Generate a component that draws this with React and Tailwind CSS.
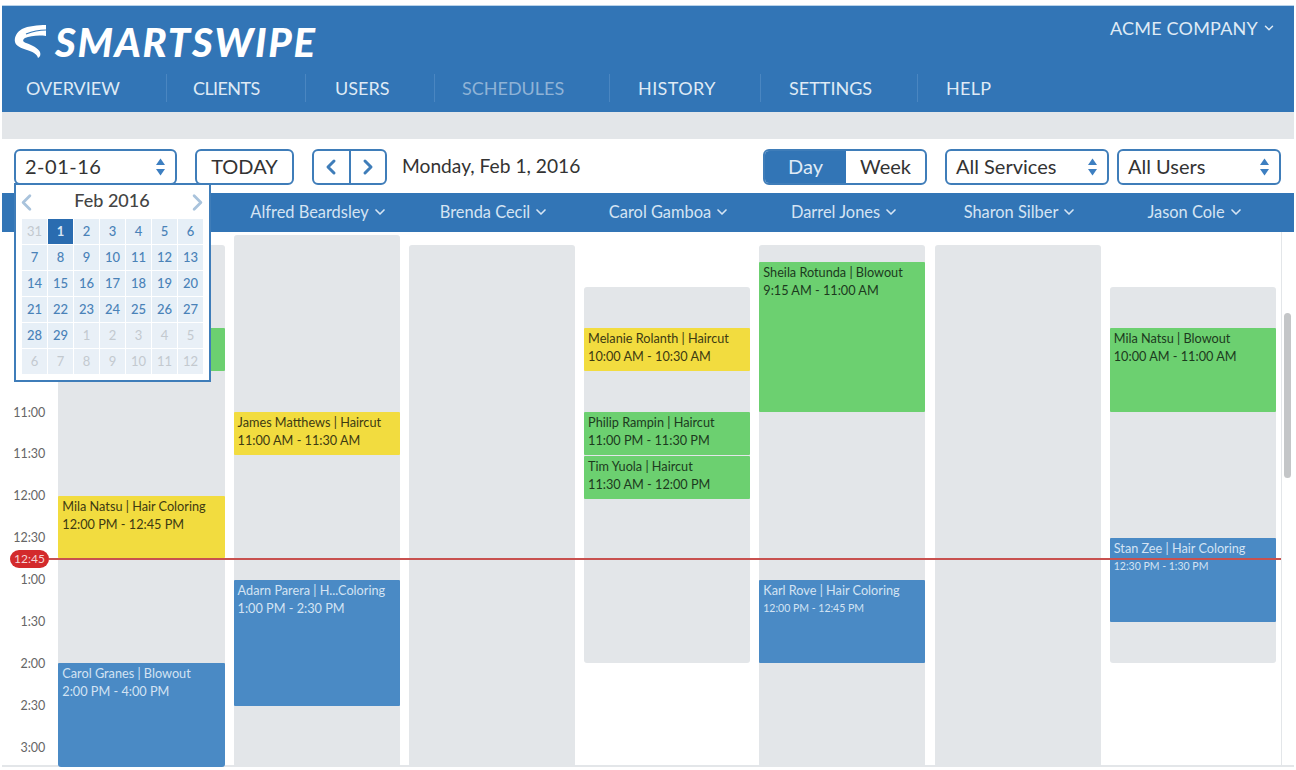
import React from 'react';
import { ChevronDown, ChevronLeft, ChevronRight } from 'lucide-react';

const NAV = [
  { label: 'OVERVIEW', cls: 'w-[165px] pl-[24px]' },
  { label: 'CLIENTS', cls: 'w-[139px] pl-[26px] tracking-[-0.6px]' },
  { label: 'USERS', cls: 'w-[129px] pl-[29px]' },
  { label: 'SCHEDULES', cls: 'w-[175px] pl-[27px] text-[#8fb3d6]' },
  { label: 'HISTORY', cls: 'w-[151px] pl-[28px] tracking-[0.4px]' },
  { label: 'SETTINGS', cls: 'w-[157px] pl-[28px]' },
  { label: 'HELP', cls: 'pl-[28px] tracking-[0.3px] border-r-0' },
];

const STAFF = [
  { name: 'Alfred Beardsley', w: 'w-[176px]' },
  { name: 'Brenda Cecil', w: 'w-[175px]' },
  { name: 'Carol Gamboa', w: 'w-[175px]' },
  { name: 'Darrel Jones', w: 'w-[176px]' },
  { name: 'Sharon Silber', w: 'w-[175px]' },
  { name: 'Jason Cole', w: 'w-[175px]' },
];

const TIMES = ['11:00', '11:30', '12:00', '12:30', '1:00', '1:30', '2:00', '2:30', '3:00'];

const CAL = [
  [31, 1, 2, 3, 4, 5, 6],
  [7, 8, 9, 10, 11, 12, 13],
  [14, 15, 16, 17, 18, 19, 20],
  [21, 22, 23, 24, 25, 26, 27],
  [28, 29, 1, 2, 3, 4, 5],
  [6, 7, 8, 9, 10, 11, 12],
];

const EVENT_COLORS = {
  green: 'bg-[#6cd070] text-[#1c3a1e]',
  yellow: 'bg-[#f2dc3f] text-[#3d3a12]',
  blue: 'bg-[#4a8ac5] text-[#d3e3f3]',
};

// gap = px from the end of the previous block, h = block height
const COLUMNS = [
  {
    top: 'mt-[13px]',
    h: 'h-[522px]',
    events: [
      { gap: 'mt-[83px]', h: 'h-[43px]', color: 'green', title: '', time: '' },
      { gap: 'mt-[125px]', h: 'h-[62px]', color: 'yellow', title: 'Mila Natsu | Hair Coloring', time: '12:00 PM - 12:45 PM' },
      { gap: 'mt-[105px]', h: 'h-[104px]', color: 'blue', title: 'Carol Granes | Blowout', time: '2:00 PM - 4:00 PM' },
    ],
  },
  {
    top: 'mt-[3px]',
    h: 'h-[532px]',
    events: [
      { gap: 'mt-[177px]', h: 'h-[43px]', color: 'yellow', title: 'James Matthews | Haircut', time: '11:00 AM - 11:30 AM' },
      { gap: 'mt-[125px]', h: 'h-[126px]', color: 'blue', title: 'Adarn Parera | H...Coloring', time: '1:00 PM - 2:30 PM' },
    ],
  },
  { top: 'mt-[13px]', h: 'h-[522px]', events: [] },
  {
    top: 'mt-[55px]',
    h: 'h-[376px]',
    events: [
      { gap: 'mt-[41px]', h: 'h-[43px]', color: 'yellow', title: 'Melanie Rolanth | Haircut', time: '10:00 AM - 10:30 AM' },
      { gap: 'mt-[41px]', h: 'h-[43px]', color: 'green', title: 'Philip Rampin | Haircut', time: '11:00 PM - 11:30 PM' },
      { gap: 'mt-[1px]', h: 'h-[43px]', color: 'green', title: 'Tim Yuola | Haircut', time: '11:30 AM - 12:00 PM' },
    ],
  },
  {
    top: 'mt-[13px]',
    h: 'h-[522px]',
    events: [
      { gap: 'mt-[17px]', h: 'h-[150px]', color: 'green', title: 'Sheila Rotunda | Blowout', time: '9:15 AM - 11:00 AM' },
      { gap: 'mt-[168px]', h: 'h-[83px]', color: 'blue', title: 'Karl Rove | Hair Coloring', time: '12:00 PM - 12:45 PM', small: true },
    ],
  },
  { top: 'mt-[13px]', h: 'h-[522px]', events: [] },
  {
    top: 'mt-[55px]',
    h: 'h-[376px]',
    events: [
      { gap: 'mt-[41px]', h: 'h-[84px]', color: 'green', title: 'Mila Natsu | Blowout', time: '10:00 AM - 11:00 AM' },
      { gap: 'mt-[126px]', h: 'h-[84px]', color: 'blue', title: 'Stan Zee | Hair Coloring', time: '12:30 PM - 1:30 PM', small: true },
    ],
  },
];

const UpDown = () => (
  <svg width="11" height="20" viewBox="0 0 11 20" className="mt-[2px] shrink-0">
    <path d="M5.5 1.5 L10 8 H1 Z" fill="#3d7fc1" />
    <path d="M5.5 18.5 L10 12 H1 Z" fill="#3d7fc1" />
  </svg>
);

const Select = ({ label, className }) => (
  <div className={`flex h-[36px] items-center justify-between rounded-[6px] border-2 border-[#3f7db9] bg-white pb-[3px] pl-[9px] pr-[9px] text-[20px] text-[#333] ${className}`}>
    <span>{label}</span>
    <UpDown />
  </div>
);

const Logo = () => (
  <svg width="34" height="36" viewBox="0 0 34 36" className="shrink-0">
    <path
      d="M32 1 L32 12 C24 11 16 12 11 14 C8 16 9 18 12 19 C18 21 24 24 26 28 C27 31 26 33 24 34 C23 30 19 28 13 26 C7 24 2 22 1 18 C0 13 3 8 8 5 C14 2 24 1 32 1 Z"
      fill="#fff"
    />
    <path d="M32 6 C24 6 17 8 12 10" fill="none" stroke="#3275b6" strokeWidth="1.2" />
  </svg>
);

const DatePopup = () => (
  <div className="absolute left-[14px] top-[183px] z-20 w-[197px] border-2 border-[#3f7db9] bg-white px-[6px] pb-[6px]">
    <div className="flex h-[34px] items-center justify-between text-[#a9c3dc]">
      <ChevronLeft size={27} strokeWidth={2.5} className="-ml-[9px]" />
      <span className="pb-[4px] text-[18px] font-medium text-[#444]">Feb 2016</span>
      <ChevronRight size={27} strokeWidth={2.5} className="-mr-[8px]" />
    </div>
    <div className="grid grid-cols-7 gap-px">
      {CAL.flatMap((week, i) =>
        week.map((day, j) => {
          const muted = (i === 0 && j === 0) || i === 5 || (i === 4 && j > 1);
          const active = i === 0 && j === 1;
          return (
            <div
              key={`${i}-${j}`}
              className={`flex h-[25px] items-center justify-center pt-[1px] text-[13px] ${
                active
                  ? 'bg-[#2a6cb0] font-bold text-[#d7e6f5]'
                  : muted
                    ? 'bg-[#e9f0f7] text-[#c3c9cf]'
                    : 'bg-[#e6eff7] font-medium text-[#4a82b8]'
              }`}
            >
              {day}
            </div>
          );
        }),
      )}
    </div>
  </div>
);

const EventBlock = ({ ev }) => (
  <div className={`${ev.gap} ${ev.h} ${EVENT_COLORS[ev.color]} rounded-[1px] px-[4px] pt-[1px] text-[12.7px] leading-[18px]`}>
    <div className="whitespace-nowrap">{ev.title}</div>
    <div className={`whitespace-nowrap ${ev.small ? 'text-[10.5px]' : ''}`}>{ev.time}</div>
  </div>
);

export default function App() {
  return (
    <div className="relative h-[770px] w-[1296px] overflow-hidden bg-white px-[2px] pt-[5px] font-['Lato','Noto_Sans',sans-serif]">
      <header className="flex h-[107px] flex-col justify-between border-t border-[#b9d3ea] bg-[#3275b6] text-[#dfeaf5]">
        <div className="flex justify-between pl-[12px] pr-[18px]">
          <div className="flex items-center gap-[7px] pt-[16px]">
            <Logo />
            <span className="text-[40px] font-black italic leading-[40px] tracking-[1.7px] text-white">SMARTSWIPE</span>
          </div>
          <div className="flex items-center gap-[4px] self-start pt-[11px] text-[18px] leading-[22px] tracking-[0.2px]">
            ACME COMPANY
            <ChevronDown size={14} strokeWidth={2.5} />
          </div>
        </div>
        <nav className="flex pb-[10px]">
          {NAV.map((item) => (
            <div key={item.label} className={`flex h-[28px] items-center border-r border-[#4a86c1] text-[18px] ${item.cls}`}>
              {item.label}
            </div>
          ))}
        </nav>
      </header>

      <div className="h-[27px] bg-[#e3e6e9]" />

      <div className="flex h-[54px] items-center pl-[12px] pr-[13px] pt-[2px]">
        <Select label="2-01-16" className="w-[163px] tracking-[0.5px]" />
        <button className="ml-[18px] h-[36px] w-[99px] rounded-[6px] border-2 border-[#3f7db9] bg-white pb-[3px] text-[20px] text-[#333]">TODAY</button>
        <div className="ml-[18px] flex h-[36px] w-[75px] rounded-[6px] border-2 border-[#3f7db9] text-[#3f7db9]">
          <div className="flex flex-1 items-center justify-center border-r-2 border-[#3f7db9]">
            <ChevronLeft size={24} strokeWidth={3} />
          </div>
          <div className="flex flex-1 items-center justify-center">
            <ChevronRight size={24} strokeWidth={3} />
          </div>
        </div>
        <div className="ml-[15px] pb-[2px] text-[19.2px] text-[#333]">Monday, Feb 1, 2016</div>
        <div className="ml-auto flex h-[36px] w-[164px] overflow-hidden rounded-[6px] border-2 border-[#3f7db9] text-[20px]">
          <div className="flex w-[81px] items-center justify-center bg-[#3275b6] pb-[3px] text-[#dfeaf5]">Day</div>
          <div className="flex flex-1 items-center justify-center pb-[3px] text-[#333]">Week</div>
        </div>
        <Select label="All Services" className="ml-[18px] w-[164px]" />
        <Select label="All Users" className="ml-[8px] w-[164px]" />
      </div>

      <div className="flex h-[39px] bg-[#3275b6] pb-[1px] pl-[229px] text-[16.4px] text-[#d5e4f3]">
        {STAFF.map((s) => (
          <div key={s.name} className={`flex ${s.w} items-center justify-center gap-[3px]`}>
            {s.name}
            <ChevronDown size={16} strokeWidth={2.5} />
          </div>
        ))}
      </div>

      <div className="flex h-[535px] border-b-2 border-[#e3e6e9]">
        <div className="flex w-[56.35px] shrink-0 flex-col pr-[13px] pt-[160px] text-right text-[12.5px] text-[#666]">
          {TIMES.map((t) => (
            <div key={t} className="flex h-[41.9px] shrink-0 items-center justify-end">
              {t}
            </div>
          ))}
        </div>
        <div className="flex w-[1222.65px] shrink-0 gap-[9.05px]">
          {COLUMNS.map((col, i) => (
            <div key={i} className={`${col.top} ${col.h} w-[166.2px] shrink-0 overflow-hidden rounded-[3px] bg-[#e3e6e9]`}>
              {col.events.map((ev, k) => (
                <EventBlock key={k} ev={ev} />
              ))}
            </div>
          ))}
        </div>
        <div className="flex w-[13px] border-l border-[#e3e6e9] pl-[2px]">
          <div className="mt-[81px] h-[165px] w-[7px] rounded-full bg-[#c4c6c8]" />
        </div>
      </div>

      <DatePopup />

      {/* current time marker */}
      <div className="absolute left-[10px] top-[550px] z-10 flex w-[1271px] items-center">
        <div className="flex h-[18px] w-[39px] items-center justify-center rounded-full bg-[#d32a2c] text-[12px] text-[#f6d5d5]">12:45</div>
        <div className="h-[2px] flex-1 bg-[#c8514f]" />
      </div>
    </div>
  );
}
